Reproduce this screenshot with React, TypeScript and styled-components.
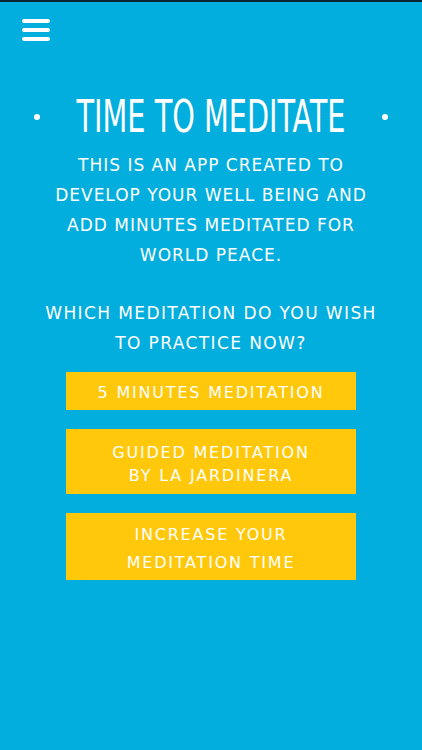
import React from 'react';
import styled, { createGlobalStyle } from 'styled-components';

const GlobalStyle = createGlobalStyle`
  html, body {
    margin: 0;
    padding: 0;
    background: #02aedd;
  }
  * {
    box-sizing: border-box;
  }
`;

const Screen = styled.div`
  width: 422px;
  height: 750px;
  background: #02aedd;
  border-top: 2px solid #0d2436;
  display: flex;
  flex-direction: column;
  color: #ffffff;
  font-family: 'DejaVu Sans', sans-serif;
  overflow: hidden;
`;

const TopBar = styled.header`
  display: flex;
  padding: 17px 0 0 22px;
  height: 60px;
`;

const MenuButton = styled.button`
  width: 28px;
  height: 22px;
  padding: 0;
  border: none;
  background: transparent;
  display: flex;
  flex-direction: column;
  justify-content: space-between;
  cursor: pointer;
`;

const MenuBar = styled.span`
  display: block;
  height: 4px;
  border-radius: 2px;
  background: #ffffff;
`;

const TitleRow = styled.div`
  display: flex;
  align-items: center;
  padding: 0 34px;
  margin-top: 31px;
  height: 48px;
`;

const Dot = styled.span`
  flex-shrink: 0;
  width: 6px;
  height: 6px;
  border-radius: 50%;
  background: #ffffff;
`;

const Title = styled.h1`
  flex: 1;
  min-width: 0;
  display: flex;
  justify-content: center;
  margin: 0;
  font-family: 'DejaVu Sans Condensed', 'DejaVu Sans', sans-serif;
  font-weight: normal;
  font-size: 45px;
  line-height: 48px;
  white-space: nowrap;
  transform: scaleX(0.71);
`;

const Paragraph = styled.p<{ $top: number; $spacing: number }>`
  margin: ${(p) => p.$top}px 0 0;
  text-align: center;
  font-size: 17px;
  line-height: 30px;
  letter-spacing: ${(p) => p.$spacing}px;
  text-transform: uppercase;
`;

const Choices = styled.div`
  display: flex;
  flex-direction: column;
  align-items: center;
  gap: 19px;
  margin-top: 14px;
`;

const Choice = styled.button<{ $height: number; $lineHeight: number }>`
  width: 290px;
  height: ${(p) => p.$height}px;
  padding: 4px 0 0;
  border: none;
  background: #ffc80b;
  color: #ffffff;
  font-family: 'DejaVu Sans', sans-serif;
  font-size: 16px;
  line-height: ${(p) => p.$lineHeight}px;
  letter-spacing: 1.8px;
  text-transform: uppercase;
  display: flex;
  flex-direction: column;
  align-items: center;
  justify-content: center;
  cursor: pointer;
`;

const choices = [
  { lines: ['5 minutes meditation'], height: 38, lineHeight: 24 },
  { lines: ['guided meditation', 'by la jardinera'], height: 65, lineHeight: 23 },
  { lines: ['increase your', 'meditation time'], height: 67, lineHeight: 28 },
];

const App: React.FC = () => {
  return (
    <>
      <GlobalStyle />
      <Screen>
        <TopBar>
          <MenuButton aria-label="Menu">
            <MenuBar />
            <MenuBar />
            <MenuBar />
          </MenuButton>
        </TopBar>

        <TitleRow>
          <Dot />
          <Title>TIME TO MEDITATE</Title>
          <Dot />
        </TitleRow>

        <Paragraph $top={9} $spacing={1}>
          This is an app created to
          <br />
          develop your well being and
          <br />
          add minutes meditated for
          <br />
          world peace.
        </Paragraph>

        <Paragraph $top={28} $spacing={1.4}>
          Which meditation do you wish
          <br />
          to practice now?
        </Paragraph>

        <Choices>
          {choices.map((c) => (
            <Choice key={c.lines[0]} $height={c.height} $lineHeight={c.lineHeight}>
              {c.lines.map((l) => (
                <span key={l}>{l}</span>
              ))}
            </Choice>
          ))}
        </Choices>
      </Screen>
    </>
  );
};

export default App;
